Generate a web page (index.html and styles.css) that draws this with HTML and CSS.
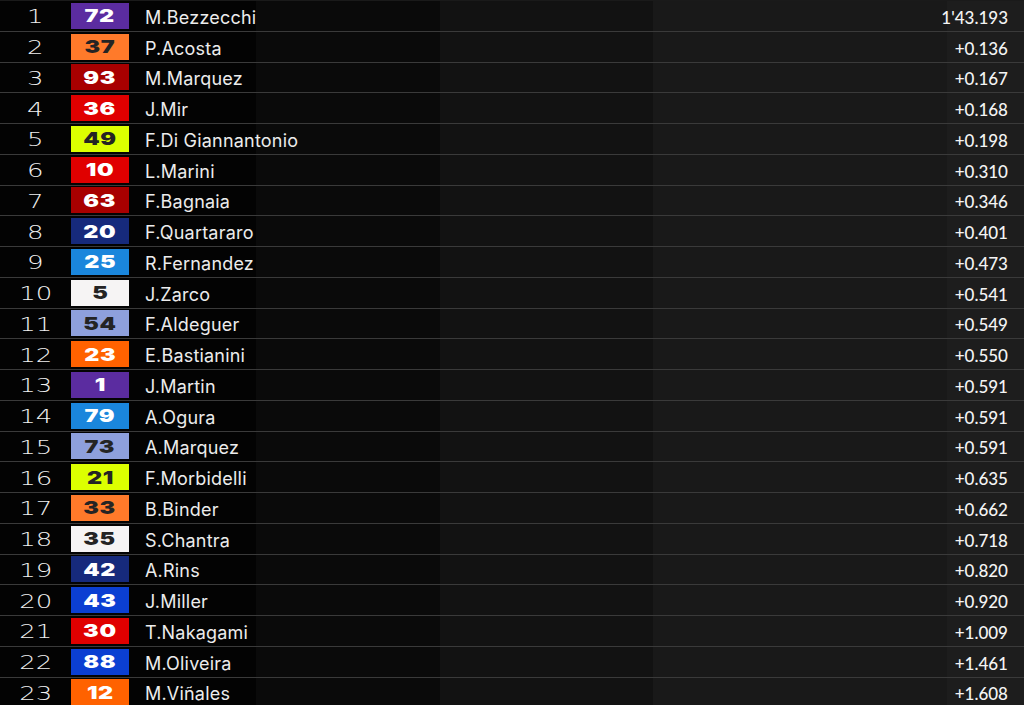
FILE: index.html
```html
<!DOCTYPE html>
<html lang="en">
<head>
<meta charset="utf-8">
<title>Classification</title>
<link rel="stylesheet" href="styles.css">
</head>
<body>
<div class="table">
  <div class="row"><span class="pos"><i>1</i></span><span class="num c-purple"><i>72</i></span><span class="name">M.Bezzecchi</span><span class="time">1'43.193</span></div>
  <div class="row"><span class="pos"><i>2</i></span><span class="num c-orange dark"><i>37</i></span><span class="name">P.Acosta</span><span class="time">+0.136</span></div>
  <div class="row"><span class="pos"><i>3</i></span><span class="num c-darkred"><i>93</i></span><span class="name">M.Marquez</span><span class="time">+0.167</span></div>
  <div class="row"><span class="pos"><i>4</i></span><span class="num c-red"><i>36</i></span><span class="name">J.Mir</span><span class="time">+0.168</span></div>
  <div class="row"><span class="pos"><i>5</i></span><span class="num c-lime dark"><i>49</i></span><span class="name">F.Di Giannantonio</span><span class="time">+0.198</span></div>
  <div class="row"><span class="pos"><i>6</i></span><span class="num c-red"><i>10</i></span><span class="name">L.Marini</span><span class="time">+0.310</span></div>
  <div class="row"><span class="pos"><i>7</i></span><span class="num c-darkred"><i>63</i></span><span class="name">F.Bagnaia</span><span class="time">+0.346</span></div>
  <div class="row"><span class="pos"><i>8</i></span><span class="num c-navy"><i>20</i></span><span class="name">F.Quartararo</span><span class="time">+0.401</span></div>
  <div class="row"><span class="pos"><i>9</i></span><span class="num c-sky"><i>25</i></span><span class="name">R.Fernandez</span><span class="time">+0.473</span></div>
  <div class="row"><span class="pos"><i>10</i></span><span class="num c-white dark"><i>5</i></span><span class="name">J.Zarco</span><span class="time">+0.541</span></div>
  <div class="row"><span class="pos"><i>11</i></span><span class="num c-peri dark"><i>54</i></span><span class="name">F.Aldeguer</span><span class="time">+0.549</span></div>
  <div class="row"><span class="pos"><i>12</i></span><span class="num c-ktm"><i>23</i></span><span class="name">E.Bastianini</span><span class="time">+0.550</span></div>
  <div class="row"><span class="pos"><i>13</i></span><span class="num c-purple"><i>1</i></span><span class="name">J.Martin</span><span class="time">+0.591</span></div>
  <div class="row"><span class="pos"><i>14</i></span><span class="num c-sky"><i>79</i></span><span class="name">A.Ogura</span><span class="time">+0.591</span></div>
  <div class="row"><span class="pos"><i>15</i></span><span class="num c-peri dark"><i>73</i></span><span class="name">A.Marquez</span><span class="time">+0.591</span></div>
  <div class="row"><span class="pos"><i>16</i></span><span class="num c-lime dark"><i>21</i></span><span class="name">F.Morbidelli</span><span class="time">+0.635</span></div>
  <div class="row"><span class="pos"><i>17</i></span><span class="num c-orange dark"><i>33</i></span><span class="name">B.Binder</span><span class="time">+0.662</span></div>
  <div class="row"><span class="pos"><i>18</i></span><span class="num c-white dark"><i>35</i></span><span class="name">S.Chantra</span><span class="time">+0.718</span></div>
  <div class="row"><span class="pos"><i>19</i></span><span class="num c-navy"><i>42</i></span><span class="name">A.Rins</span><span class="time">+0.820</span></div>
  <div class="row"><span class="pos"><i>20</i></span><span class="num c-blue"><i>43</i></span><span class="name">J.Miller</span><span class="time">+0.920</span></div>
  <div class="row"><span class="pos"><i>21</i></span><span class="num c-red"><i>30</i></span><span class="name">T.Nakagami</span><span class="time">+1.009</span></div>
  <div class="row"><span class="pos"><i>22</i></span><span class="num c-blue"><i>88</i></span><span class="name">M.Oliveira</span><span class="time">+1.461</span></div>
  <div class="row"><span class="pos"><i>23</i></span><span class="num c-ktm"><i>12</i></span><span class="name">M.Viñales</span><span class="time">+1.608</span></div>
</div>
</body>
</html>
```

FILE: styles.css
```css
html, body {
  margin: 0;
  padding: 0;
  background: #000;
}

.table {
  width: 1024px;
  height: 705px;
  display: grid;
  grid-template-rows: repeat(23, 30.76px);
  align-content: start;
  background: linear-gradient(to right,
    #030303 0, #030303 256px,
    #0a0a0a 256px, #0a0a0a 440px,
    #121212 440px, #121212 653px,
    #191919 653px, #191919 947px,
    #1d1d1d 947px, #1d1d1d 100%);
  overflow: hidden;
}

.row {
  display: grid;
  grid-template-columns: 71px 58px 1fr auto;
  align-items: center;
  border-top: 1px solid #3a3a3a;
  min-height: 0;
}

.row:first-child { border-top-color: #1a1a1a; }

.pos {
  text-align: center;
  color: #f0f0f0;
  font-family: "DejaVu Sans", sans-serif;
  font-weight: 200;
  font-size: 20px;
  padding-top: 1px;
}

.pos i,
.num i {
  font-style: normal;
  display: inline-block;
}

.pos i { transform: scaleX(1.3); }

.num {
  height: 26px;
  display: flex;
  align-items: center;
  justify-content: center;
  font-family: "Inter", sans-serif;
  font-weight: 900;
  font-size: 18px;
  color: #fff;
}

.num i { transform: scaleX(1.3); letter-spacing: 0.5px; }

.num.dark { color: #242424; }

.c-purple  { background: #5b2ca0; }
.c-orange  { background: #ff7a2a; }
.c-darkred { background: #a80000; }
.c-red     { background: #e00000; }
.c-lime    { background: #dcff00; }
.c-navy    { background: #162a7c; }
.c-sky     { background: #1a86dc; }
.c-white   { background: #f6f4f4; }
.c-peri    { background: #8ea0dc; }
.c-ktm     { background: #ff6200; }
.c-blue    { background: #0b3fd2; }

.name {
  padding-left: 16px;
  padding-top: 3px;
  color: #ececec;
  font-family: "Inter", sans-serif;
  font-size: 18px;
  letter-spacing: 0.2px;
  white-space: nowrap;
}

.time {
  padding-right: 16px;
  padding-top: 3px;
  text-align: right;
  color: #f4f4f4;
  font-family: "Lato", sans-serif;
  font-weight: 500;
  font-size: 17px;
}
```
